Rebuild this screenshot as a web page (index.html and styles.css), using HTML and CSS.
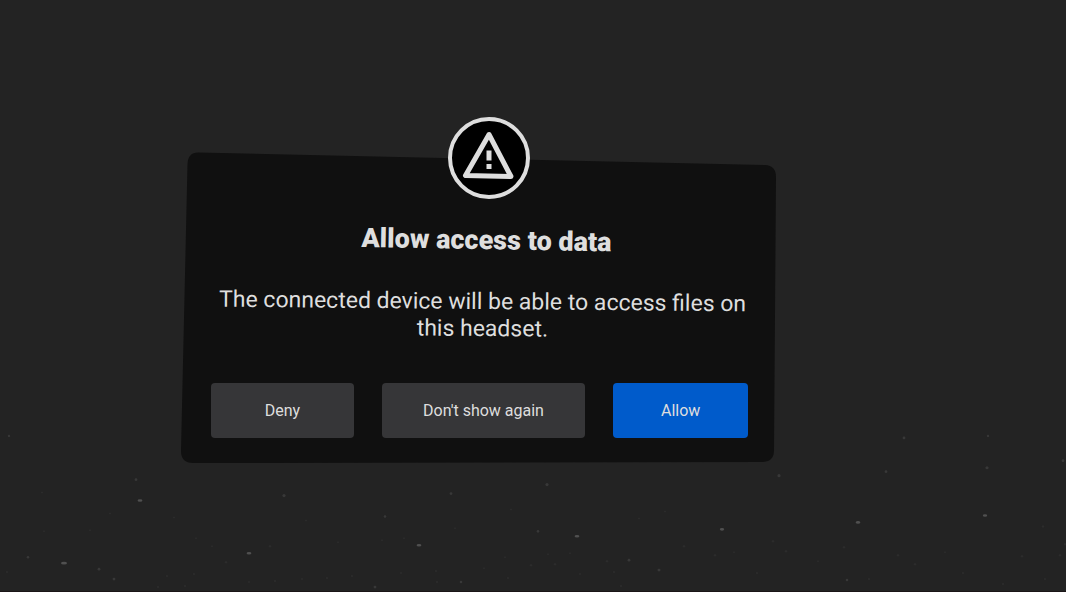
FILE: index.html
```html
<!DOCTYPE html>
<html lang="en">
<head>
<meta charset="utf-8">
<meta name="viewport" content="width=device-width, initial-scale=1">
<title>Allow access to data</title>
<link rel="stylesheet" href="styles.css">
</head>
<body>
<svg class="stars" viewBox="0 0 1066 172" preserveAspectRatio="none" aria-hidden="true">
  <g class="star-bright">
    <ellipse cx="64" cy="144" rx="3" ry="1.3"/><ellipse cx="140" cy="81" rx="2.4" ry="1.3"/>
    <ellipse cx="249" cy="134" rx="2.4" ry="1.3"/><ellipse cx="419" cy="126" rx="2.4" ry="1.3"/>
    <ellipse cx="577" cy="117" rx="2.4" ry="1.3"/><ellipse cx="722" cy="110" rx="2.2" ry="1.3"/>
    <ellipse cx="858" cy="103" rx="2.2" ry="1.3"/><ellipse cx="985" cy="96" rx="2.2" ry="1.3"/>
  </g>
  <g class="star-mid">
    <circle cx="284" cy="76" r="1.6"/><circle cx="547" cy="65" r="1.6"/><circle cx="451" cy="74" r="1.4"/>
    <circle cx="779" cy="56" r="1.6"/><circle cx="886" cy="52" r="1.4"/><circle cx="987" cy="48" r="1.6"/>
    <circle cx="136" cy="60" r="1.4"/><circle cx="9" cy="16" r="1.2"/><circle cx="904" cy="18" r="1.4"/>
    <circle cx="988" cy="16" r="1.2"/><circle cx="1063" cy="41" r="1.4"/><circle cx="28" cy="138" r="1.3"/>
    <circle cx="99" cy="150" r="1.4"/><circle cx="114" cy="160" r="1.4"/><circle cx="385" cy="97" r="1.3"/>
    <circle cx="538" cy="112" r="1.3"/><circle cx="629" cy="141" r="1.4"/><circle cx="659" cy="151" r="1.5"/>
    <circle cx="375" cy="168" r="1.4"/><circle cx="461" cy="163" r="1.3"/><circle cx="847" cy="161" r="1.3"/>
  </g>
  <g class="star-dim">
    <circle cx="42" cy="73" r="1"/><circle cx="44" cy="112" r="1"/><circle cx="7" cy="153" r="1.2"/>
    <circle cx="90" cy="111" r="1"/><circle cx="110" cy="94" r="1"/><circle cx="174" cy="98" r="1"/>
    <circle cx="196" cy="119" r="1"/><circle cx="212" cy="127" r="1"/><circle cx="226" cy="143" r="1.2"/>
    <circle cx="270" cy="127" r="1.2"/><circle cx="167" cy="157" r="1.2"/><circle cx="194" cy="155" r="1.2"/>
    <circle cx="275" cy="162" r="1.2"/><circle cx="302" cy="160" r="1"/><circle cx="327" cy="159" r="1.2"/>
    <circle cx="185" cy="167" r="1.2"/><circle cx="158" cy="168" r="1.2"/><circle cx="249" cy="163" r="1"/>
    <circle cx="306" cy="101" r="1"/><circle cx="338" cy="123" r="1"/><circle cx="352" cy="157" r="1.2"/>
    <circle cx="382" cy="121" r="1"/><circle cx="401" cy="154" r="1"/><circle cx="436" cy="152" r="1.2"/>
    <circle cx="404" cy="119" r="1"/><circle cx="437" cy="163" r="1.2"/><circle cx="455" cy="109" r="1"/>
    <circle cx="484" cy="149" r="1"/><circle cx="505" cy="138" r="1"/><circle cx="508" cy="159" r="1.2"/>
    <circle cx="511" cy="90" r="1"/><circle cx="531" cy="146" r="1.2"/><circle cx="548" cy="135" r="1"/>
    <circle cx="555" cy="145" r="1.2"/><circle cx="570" cy="134" r="1"/><circle cx="580" cy="155" r="1"/>
    <circle cx="607" cy="142" r="1.2"/><circle cx="614" cy="153" r="1.2"/><circle cx="621" cy="167" r="1.2"/>
    <circle cx="639" cy="99" r="1"/><circle cx="665" cy="92" r="1"/><circle cx="684" cy="127" r="1.2"/>
    <circle cx="715" cy="136" r="1.2"/><circle cx="734" cy="133" r="1"/><circle cx="773" cy="122" r="1.2"/>
    <circle cx="757" cy="154" r="1.2"/><circle cx="786" cy="132" r="1.2"/><circle cx="818" cy="142" r="1"/>
    <circle cx="844" cy="128" r="1.2"/><circle cx="869" cy="160" r="1.2"/><circle cx="898" cy="136" r="1.2"/>
    <circle cx="915" cy="145" r="1.2"/><circle cx="945" cy="133" r="1"/><circle cx="963" cy="154" r="1.2"/>
    <circle cx="1003" cy="165" r="1.2"/><circle cx="1022" cy="137" r="1.2"/><circle cx="1043" cy="107" r="1.2"/>
    <circle cx="1045" cy="160" r="1.2"/><circle cx="1060" cy="136" r="1.2"/><circle cx="1065" cy="125" r="1.2"/>
  </g>
</svg>
<main class="scene">
  <section class="dialog" role="alertdialog" aria-labelledby="dialog-title" aria-describedby="dialog-text">
    <svg class="panel" viewBox="0 0 595 311" preserveAspectRatio="none" aria-hidden="true">
      <path d="M17 0.5 L584 13 Q595 13.500 595 25 L593 299 Q592.500 310 581 310 L12 311 Q0 311 0 299 L6.500 12 Q7 0.500 17 0.500Z"/>
    </svg>
    <svg class="badge" viewBox="0 0 82 82" aria-hidden="true">
      <circle class="badge-ring" cx="41" cy="41" r="39"/>
      <path class="badge-triangle" d="M41 17.500 L17.500 58.600 L63 59.500Z"/>
      <path class="badge-mark" d="M38.500 33.500h5v10h-5zM38.500 47h5v5h-5z"/>
    </svg>
    <h1 class="title" id="dialog-title">Allow access to data</h1>
    <p class="text" id="dialog-text">The connected device will be able to access files on this headset.</p>
    <div class="actions">
      <button class="button" type="button">Deny</button>
      <button class="button" type="button">Don't show again</button>
      <button class="button button-primary" type="button">Allow</button>
    </div>
  </section>
</main>
</body>
</html>
```

FILE: styles.css
```css
* {
  box-sizing: border-box;
}

body {
  margin: 0;
  min-height: 100vh;
  background: #232323;
  color: #dedede;
  font-family: Roboto, "Liberation Sans", sans-serif;
}

.stars {
  position: absolute;
  left: 0;
  bottom: 0;
  z-index: -2;
  width: 100%;
  height: 172px;
  border-bottom: 1px solid #1b1517;
}

.star-bright { fill: #505050; }
.star-mid { fill: #383838; }
.star-dim { fill: #2c2c2c; }

.scene {
  display: grid;
  grid-template-columns: 181fr 595fr 290fr;
  padding-top: 152px;
}

.dialog {
  grid-column: 2;
  position: relative;
  padding: 72px 28px 25px 30px;
  text-align: center;
}

.panel {
  position: absolute;
  inset: 0;
  z-index: -1;
  width: 100%;
  height: 100%;
  fill: #101010;
}

.badge {
  position: absolute;
  top: -35px;
  left: calc(50% - 31px);
  width: 82px;
  height: 82px;
}

.badge-ring {
  fill: #000;
  stroke: #dedede;
  stroke-width: 4;
}

.badge-triangle {
  fill: none;
  stroke: #dedede;
  stroke-width: 5;
  stroke-linejoin: round;
}

.badge-mark {
  fill: #dedede;
}

.title {
  margin: 0 0 32px;
  padding-left: 14px;
  font-size: 27px;
  font-weight: 900;
  line-height: 32px;
  rotate: 1deg;
}

.text {
  margin: 0 0 41px;
  padding-left: 6px;
  font-size: 23px;
  line-height: 27px;
  rotate: 0.5deg;
}

.actions {
  display: grid;
  grid-template-columns: 143fr 204fr 135fr;
  gap: 28px;
}

.button {
  height: 55px;
  padding: 0;
  border: 0;
  border-radius: 4px;
  background: #363638;
  color: #dedede;
  font: inherit;
  font-size: 16px;
}

.button-primary {
  background: #005bcb;
}
```
